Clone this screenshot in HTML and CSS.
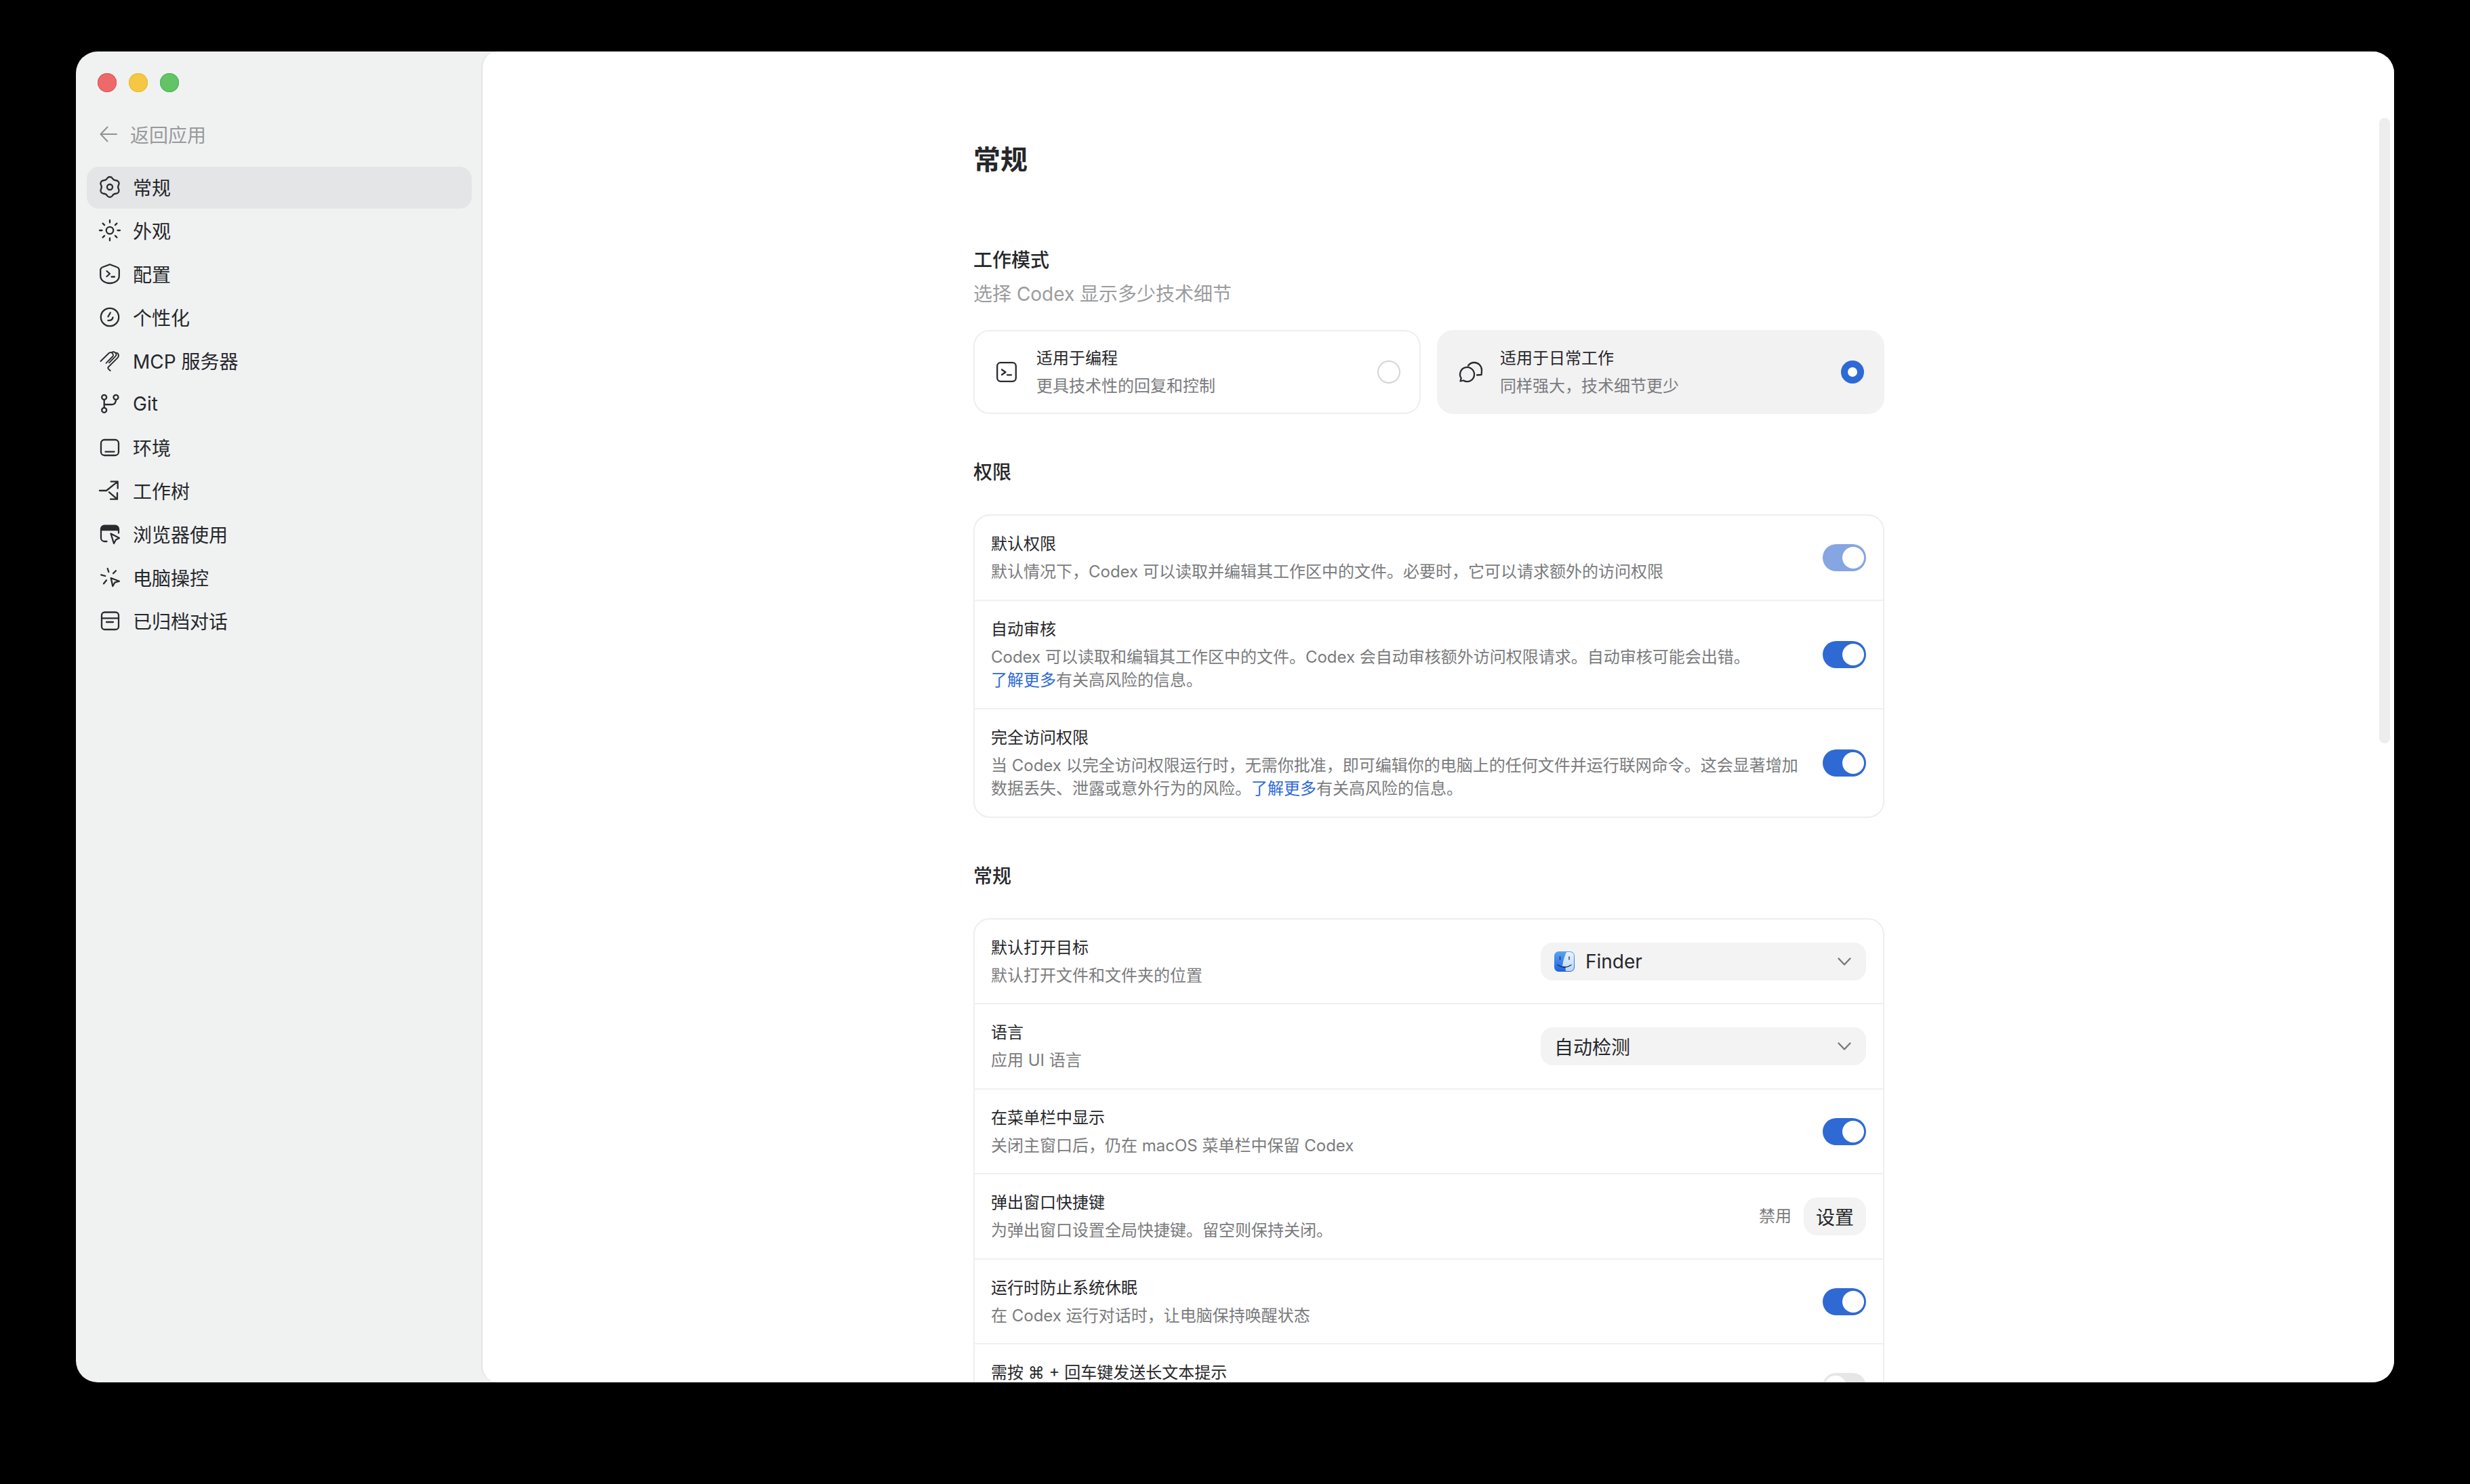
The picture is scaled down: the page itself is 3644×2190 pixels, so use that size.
FILE: index.html
```html
<!DOCTYPE html>
<html lang="zh-CN">
<head>
<meta charset="utf-8">
<title>常规 - 设置</title>
<link rel="stylesheet" href="styles.css">
</head>
<body>
<div class="window">
  <aside class="sidebar">
    <div class="traffic"><span class="dot red"></span><span class="dot yellow"></span><span class="dot green"></span></div>
    <div class="back">
      <svg class="ico" viewBox="0 0 32 32"><path d="M26 16H2.5M12.5 5.5 2.5 16l10 10.5"/></svg>
      <span>返回应用</span>
    </div>
    <nav class="nav">
      <div class="nav-item active">
        <svg class="ico" viewBox="0 0 32 32"><path d="M12.1 3.25A4.5 4.5 0 0 1 19.9 3.25Q21.6 6.25 25.09 6.25A4.5 4.5 0 0 1 28.99 13Q27.26 16 28.99 19A4.5 4.5 0 0 1 25.09 25.75Q21.6 25.75 19.9 28.75A4.5 4.5 0 0 1 12.1 28.75Q10.4 25.75 6.91 25.75A4.5 4.5 0 0 1 3.01 19Q4.74 16 3.01 13A4.5 4.5 0 0 1 6.91 6.25Q10.4 6.25 12.1 3.25Z"/><circle cx="16" cy="16" r="4"/></svg>
        <span>常规</span>
      </div>
      <div class="nav-item">
        <svg class="ico" viewBox="0 0 32 32"><circle cx="16" cy="16" r="5.2"/><path d="M16 1v3.5M16 27.5V31M1 16h3.5M27.5 16H31M5.6 5.6l2.5 2.5M23.9 23.9l2.5 2.5M5.6 26.4l2.5-2.5M23.9 8.1l2.5-2.5"/></svg>
        <span>外观</span>
      </div>
      <div class="nav-item">
        <svg class="ico" viewBox="0 0 32 32"><path d="M16 2.2 26 6q3.8 1.2 3.8 5v8C29.800 26 23 30 16 30S2.200 26 2.200 19v-8Q2.200 7.200 6 6Z"/><path d="m11.500 12 4.500 4-4.500 4M18.500 20.500h4.500"/></svg>
        <span>配置</span>
      </div>
      <div class="nav-item">
        <svg class="ico" viewBox="0 0 32 32"><circle cx="16" cy="16" r="13.200"/><path d="m16.800 9.500-3.300 5.800M20.500 16.500q-1 5-7 4.300"/></svg>
        <span>个性化</span>
      </div>
      <div class="nav-item">
        <svg class="ico thin" viewBox="0 0 32 32"><path d="M2.500 17 14.500 5.300q2.800-2.600 5.300 0 2.600 2.700 0 5.200L10.500 19.800M19 4.300q2.700-2.300 5.300.3 2.500 2.700 0 5.200l-9.300 9.500M24 4.800q3.200-.8 4.500 1.700 1.300 3-.8 5.300L14 25.500q-1.500 1.700 0 3l2.700 2.500"/></svg>
        <span>MCP 服务器</span>
      </div>
      <div class="nav-item">
        <svg class="ico" viewBox="0 0 32 32"><circle cx="7.700" cy="6.300" r="3.500"/><circle cx="25" cy="6.300" r="3.500"/><circle cx="7.700" cy="25.300" r="3.500"/><path d="M7.700 9.800v12M25 9.800q0 7.200-6 7.200H7.700"/></svg>
        <span>Git</span>
      </div>
      <div class="nav-item">
        <svg class="ico" viewBox="0 0 32 32"><rect x="3" y="5" width="26" height="23" rx="5"/><path d="M9.500 22.700h13"/></svg>
        <span>环境</span>
      </div>
      <div class="nav-item">
        <svg class="ico" viewBox="0 0 32 32"><path d="M1 16h10L27.700 2.700M17.700 2.700h10v10M15 18.300l12 10.400M17 28.700h10v-9.400"/></svg>
        <span>工作树</span>
      </div>
      <div class="nav-item">
        <svg class="ico" viewBox="0 0 32 32"><path class="solid" d="M3 10V8.500A5 5 0 0 1 8 3.700h16a5 5 0 0 1 5 4.800V10Z"/><path d="M3 10v12a5 5 0 0 0 5 5h3.500M29 10v4.500"/><path d="M17.500 15.500 30 22l-5 2.500-3 5.500Z"/></svg>
        <span>浏览器使用</span>
      </div>
      <div class="nav-item">
        <svg class="ico" viewBox="0 0 32 32"><path d="m17.700 17 12.300 4.700-6.700 2-3 5.300Z"/><path d="m12.700 3 1.600 5M25 6.300l-4 4M3.300 12.300l6 1.700M7 25.300l4-5"/></svg>
        <span>电脑操控</span>
      </div>
      <div class="nav-item">
        <svg class="ico" viewBox="0 0 32 32"><rect x="4" y="3.500" width="25" height="25.500" rx="4.500"/><path d="M4 12.300h25M11 18h10"/></svg>
        <span>已归档对话</span>
      </div>
    </nav>
  </aside>

  <main class="main">
    <div class="content">
      <h1 class="page-title">常规</h1>

      <section class="first">
        <h2 class="heading tight">工作模式</h2>
        <p class="heading-sub">选择 Codex 显示多少技术细节</p>
        <div class="modes">
          <div class="mode">
            <svg class="ico" viewBox="0 0 32 32"><rect x="2.200" y="2.200" width="27.600" height="27.600" rx="5"/><path d="m9 12.500 5.500 3.700L9 20M17 20.300h6"/></svg>
            <div class="mode-text">
              <div class="title">适用于编程</div>
              <div class="sub">更具技术性的回复和控制</div>
            </div>
            <span class="radio"></span>
          </div>
          <div class="mode selected">
            <svg class="ico" viewBox="0 0 32 32"><path d="M22 19.500a10.500 10.500 0 1 0-19.300 5.700L1.500 29.500l4.500-1a10.500 10.500 0 0 0 16-9Z"/><path d="M13 6.500Q16.500 2 22 2c6 0 11 5 11 11q0 4-.5 7l-6.500.5"/></svg>
            <div class="mode-text">
              <div class="title">适用于日常工作</div>
              <div class="sub">同样强大，技术细节更少</div>
            </div>
            <span class="radio on"></span>
          </div>
        </div>
      </section>

      <section>
        <h2 class="heading">权限</h2>
        <div class="card">
          <div class="row">
            <div class="row-text">
              <div class="title">默认权限</div>
              <div class="sub">默认情况下，Codex 可以读取并编辑其工作区中的文件。必要时，它可以请求额外的访问权限</div>
            </div>
            <span class="toggle dim"></span>
          </div>
          <div class="row">
            <div class="row-text">
              <div class="title">自动审核</div>
              <div class="sub">Codex 可以读取和编辑其工作区中的文件。Codex 会自动审核额外访问权限请求。自动审核可能会出错。<br><a class="link">了解更多</a>有关高风险的信息。</div>
            </div>
            <span class="toggle"></span>
          </div>
          <div class="row">
            <div class="row-text">
              <div class="title">完全访问权限</div>
              <div class="sub">当 Codex 以完全访问权限运行时，无需你批准，即可编辑你的电脑上的任何文件并运行联网命令。这会显著增加<br>数据丢失、泄露或意外行为的风险。<a class="link">了解更多</a>有关高风险的信息。</div>
            </div>
            <span class="toggle"></span>
          </div>
        </div>
      </section>

      <section>
        <h2 class="heading">常规</h2>
        <div class="card tight-rows">
          <div class="row">
            <div class="row-text">
              <div class="title">默认打开目标</div>
              <div class="sub">默认打开文件和文件夹的位置</div>
            </div>
            <div class="select">
              <svg class="finder" viewBox="0 0 30 30">
                <defs>
                  <linearGradient id="fl" x1="0" y1="0" x2="0" y2="1"><stop offset="0" stop-color="#5aa2f5"/><stop offset="1" stop-color="#1f63e0"/></linearGradient>
                  <linearGradient id="fr" x1="0" y1="0" x2="0" y2="1"><stop offset="0" stop-color="#eaf3fd"/><stop offset="1" stop-color="#b9d6f8"/></linearGradient>
                </defs>
                <rect width="30" height="30" rx="6.500" fill="url(#fl)"/>
                <path d="M18 1h5.500A5.500 5.500 0 0 1 29 6.500v17a5.500 5.500 0 0 1-5.500 5.500H17q-.5-3.500-.5-7H12q1-10 6-21Z" fill="url(#fr)"/>
                <path d="M8.500 8v4M22 8v4M5 20q10 7 20 0" fill="none" stroke="#1d2b4a" stroke-width="1.300" stroke-linecap="round"/>
              </svg>
              <span>Finder</span>
              <svg class="chev" viewBox="0 0 24 24"><path d="m3.500 7.500 8.500 9 8.500-9"/></svg>
            </div>
          </div>
          <div class="row">
            <div class="row-text">
              <div class="title">语言</div>
              <div class="sub">应用 UI 语言</div>
            </div>
            <div class="select">
              <span>自动检测</span>
              <svg class="chev" viewBox="0 0 24 24"><path d="m3.500 7.500 8.500 9 8.500-9"/></svg>
            </div>
          </div>
          <div class="row">
            <div class="row-text">
              <div class="title">在菜单栏中显示</div>
              <div class="sub">关闭主窗口后，仍在 macOS 菜单栏中保留 Codex</div>
            </div>
            <span class="toggle"></span>
          </div>
          <div class="row">
            <div class="row-text">
              <div class="title">弹出窗口快捷键</div>
              <div class="sub">为弹出窗口设置全局快捷键。留空则保持关闭。</div>
            </div>
            <div class="shortcut">
              <span class="sub">禁用</span>
              <button class="btn">设置</button>
            </div>
          </div>
          <div class="row">
            <div class="row-text">
              <div class="title">运行时防止系统休眠</div>
              <div class="sub">在 Codex 运行对话时，让电脑保持唤醒状态</div>
            </div>
            <span class="toggle"></span>
          </div>
          <div class="row row-cut">
            <div class="row-text">
              <div class="title">需按 ⌘ + 回车键发送长文本提示</div>
            </div>
            <span class="toggle off"></span>
          </div>
        </div>
      </section>
    </div>
    <div class="scroll-thumb"></div>
  </main>
</div>
</body>
</html>
```

FILE: styles.css
```css
* { box-sizing: border-box; }

html, body {
  margin: 0;
  height: 100%;
  background: #000;
  overflow: hidden;
}

body {
  font-family: Inter, "Noto Sans CJK SC", "DejaVu Sans", sans-serif;
  color: #26272a;
  font-size: 28px;
  padding: 76px 112px 150px;
}

.window {
  display: flex;
  width: 3420px;
  height: 1964px;
  border-radius: 32px;
  overflow: hidden;
  background: #f0f2f2;
}

/* Sidebar */
.sidebar {
  flex: 0 0 598px;
  padding: 32px 14px 0 16px;
}

.traffic {
  display: flex;
  gap: 18px;
  padding-left: 16px;
}

.dot {
  width: 28px;
  height: 28px;
  border-radius: 50%;
}
.red { background: #ee6a6a; box-shadow: inset 0 0 0 1px #e2555a; }
.yellow { background: #f4c842; box-shadow: inset 0 0 0 1px #ecb92f; }
.green { background: #62c466; box-shadow: inset 0 0 0 1px #4cb552; }

.back {
  display: flex;
  align-items: center;
  gap: 14px;
  height: 64px;
  margin-top: 31px;
  margin-bottom: 15px;
  padding: 0 0 2px 18px;
  color: #98999b;
}

.ico {
  flex: none;
  width: 32px;
  height: 32px;
  fill: none;
  stroke: #2a2b2e;
  stroke-width: 2.300;
  stroke-linecap: round;
  stroke-linejoin: round;
  overflow: visible;
}
.ico.thin { stroke-width: 1.900; }
.ico .solid { fill: #2a2b2e; }
.back .ico { stroke: #8f9092; stroke-width: 2; }

.nav {
  display: flex;
  flex-direction: column;
  gap: 2px;
}

.nav-item {
  display: flex;
  align-items: center;
  gap: 18px;
  height: 62px;
  padding: 0 0 2px 18px;
  border-radius: 18px;
}
.nav-item.active { background: #e4e5e7; }

/* Main */
.main {
  position: relative;
  flex: 1;
  height: 100%;
  overflow: hidden;
  background: #fff;
  border-left: 2px solid #e3e5e5;
  border-radius: 24px 0 0 24px;
  padding: 132px 28px 0 0;
}

.content {
  width: 1344px;
  margin: 0 auto;
}

.page-title {
  margin: 0 0 100px;
  font-size: 40px;
  line-height: 56px;
  font-weight: 600;
}

section { margin-top: 66px; }
section.first { margin-top: 0; }

.heading {
  margin: 0 0 42px;
  font-size: 28px;
  line-height: 40px;
  font-weight: 500;
}
.heading.tight { margin-bottom: 10px; }

.heading-sub {
  margin: 0 0 33px;
  line-height: 40px;
  color: #9b9c9e;
}

.title {
  padding-top: 2px;
  font-size: 24px;
  line-height: 32px;
  color: #26272a;
}

.sub {
  font-size: 24px;
  line-height: 34px;
  color: #7a7b7d;
}
.title + .sub { margin-top: 8px; }

.link { color: #2f6ad6; }

/* Mode cards */
.modes {
  display: grid;
  grid-template-columns: 1fr 1fr;
  gap: 24px;
}

.mode {
  display: flex;
  align-items: center;
  gap: 28px;
  padding: 22px 28px 22px 31px;
  border: 2px solid #eeeeef;
  border-radius: 24px;
}
.mode.selected {
  background: #f2f2f3;
  border-color: #f2f2f3;
}
.mode-text { flex: 1; }

.radio {
  flex: none;
  width: 34px;
  height: 34px;
  border-radius: 50%;
  border: 2px solid #d4d5d6;
}
.radio.on {
  border: 10px solid #2f69d4;
  background: #fff;
}

/* Rows */
.card {
  border: 2px solid #eeeeef;
  border-radius: 24px;
}

.row {
  display: flex;
  align-items: center;
  gap: 32px;
  padding: 24px 25px 24px 24px;
  border-bottom: 2px solid #f0f0f1;
}
.row:last-child { border-bottom: 0; }
.row-text { flex: 1; min-width: 0; }

.tight-rows .row { padding-bottom: 23.400px; }

.row-cut { height: 124px; }
.row-cut .row-text { align-self: flex-start; }

.toggle {
  flex: none;
  display: flex;
  justify-content: flex-end;
  width: 64px;
  height: 40px;
  padding: 4px 3px;
  border-radius: 20px;
  background: #2f69d4;
}
.toggle::after {
  content: "";
  width: 32px;
  height: 32px;
  border-radius: 50%;
  background: #fff;
}
.toggle.dim { background: #85a5e3; }
.toggle.off { background: #e6e6e7; justify-content: flex-start; }

.select {
  flex: none;
  display: flex;
  align-items: center;
  gap: 16px;
  width: 480px;
  height: 56px;
  padding: 0 20px;
  border-radius: 18px;
  background: #f3f3f4;
}

.finder {
  flex: none;
  width: 30px;
  height: 30px;
}

.chev {
  flex: none;
  width: 24px;
  height: 24px;
  margin-left: auto;
  fill: none;
  stroke: #77787a;
  stroke-width: 2.400;
  stroke-linecap: round;
  stroke-linejoin: round;
}

.shortcut {
  flex: none;
  display: flex;
  align-items: center;
  gap: 18px;
}

.btn {
  width: 92px;
  height: 56px;
  padding: 0;
  border: 0;
  border-radius: 20px;
  background: #f3f3f4;
  color: #26272a;
  font: inherit;
  font-size: 28px;
}

.scroll-thumb {
  position: absolute;
  top: 98px;
  right: 6px;
  width: 16px;
  height: 923px;
  border-radius: 8px;
  background: #ecedec;
}
```
